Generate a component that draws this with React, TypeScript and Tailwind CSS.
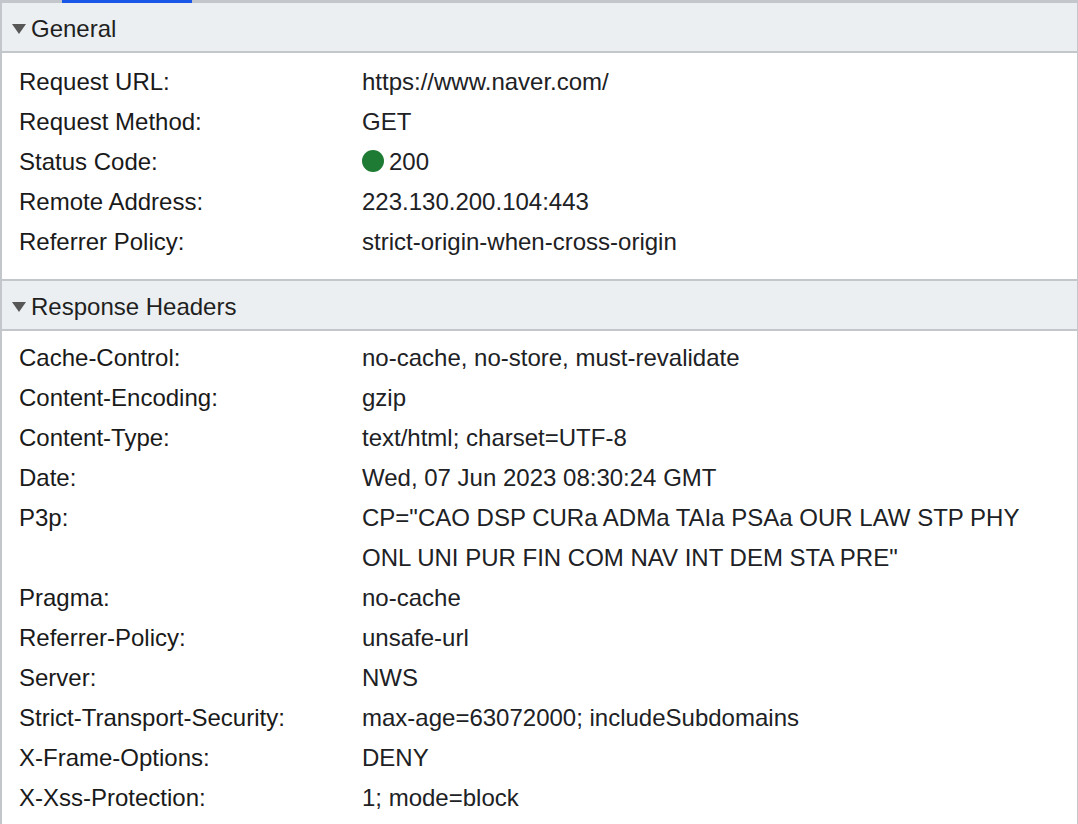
import React from "react";

type Row = { name: string; value: React.ReactNode };

const GENERAL: Row[] = [
  { name: "Request URL:", value: "https://www.naver.com/" },
  { name: "Request Method:", value: "GET" },
  {
    name: "Status Code:",
    value: (
      <span className="flex items-center gap-[5px]">
        <span className="inline-block w-[22px] h-[22px] rounded-full bg-[#1e7b34] -mt-[2px]" />
        200
      </span>
    ),
  },
  { name: "Remote Address:", value: "223.130.200.104:443" },
  { name: "Referrer Policy:", value: "strict-origin-when-cross-origin" },
];

const RESPONSE: Row[] = [
  { name: "Cache-Control:", value: "no-cache, no-store, must-revalidate" },
  { name: "Content-Encoding:", value: "gzip" },
  { name: "Content-Type:", value: "text/html; charset=UTF-8" },
  { name: "Date:", value: "Wed, 07 Jun 2023 08:30:24 GMT" },
  {
    name: "P3p:",
    value: 'CP="CAO DSP CURa ADMa TAIa PSAa OUR LAW STP PHY ONL UNI PUR FIN COM NAV INT DEM STA PRE"',
  },
  { name: "Pragma:", value: "no-cache" },
  { name: "Referrer-Policy:", value: "unsafe-url" },
  { name: "Server:", value: "NWS" },
  { name: "Strict-Transport-Security:", value: "max-age=63072000; includeSubdomains" },
  { name: "X-Frame-Options:", value: "DENY" },
  { name: "X-Xss-Protection:", value: "1; mode=block" },
];

function Section({ title, rows, last }: { title: string; rows: Row[]; last?: boolean }) {
  return (
    <div className={last ? "" : "border-b-2 border-[#c3c6cb]"}>
      {/* ── Header ── */}
      <div className="h-[50px] flex items-center bg-[#eceff1] border-b-2 border-[#c3c6cb] pl-[10px] pt-[4px]">
        <svg width="14" height="10" viewBox="0 0 14 10" className="mr-[5px]">
          <path d="M0 0 H14 L7 10 Z" fill="#575757" />
        </svg>
        <span className="text-[#1f1f1f]">{title}</span>
      </div>

      {/* ── Rows ── */}
      <div className={last ? "pt-[7px]" : "pt-[9px] pb-[17px]"}>
        {rows.map((r) => (
          <div key={r.name} className="flex leading-[40px]">
            <div className="w-[360px] pl-[17px] flex-shrink-0 text-[#1a1a1a]">{r.name}</div>
            <div className="flex-1 pr-[40px] text-[#202124]">{r.value}</div>
          </div>
        ))}
      </div>
    </div>
  );
}

export default function App() {
  return (
    <div
      className="w-[1078px] h-[824px] overflow-hidden bg-white text-[24px]"
      style={{ fontFamily: '"Liberation Sans", Arial, sans-serif' }}
    >
      {/* tab strip edge */}
      <div className="h-[3px] bg-[#c3c6cb] flex">
        <div className="ml-[62px] w-[130px] h-[3px] bg-[#1a56e8]" />
      </div>
      <div className="border-l-2 border-r border-[#c3c6cb] h-[821px]">
        <Section title="General" rows={GENERAL} />
        <Section title="Response Headers" rows={RESPONSE} last />
      </div>
    </div>
  );
}
